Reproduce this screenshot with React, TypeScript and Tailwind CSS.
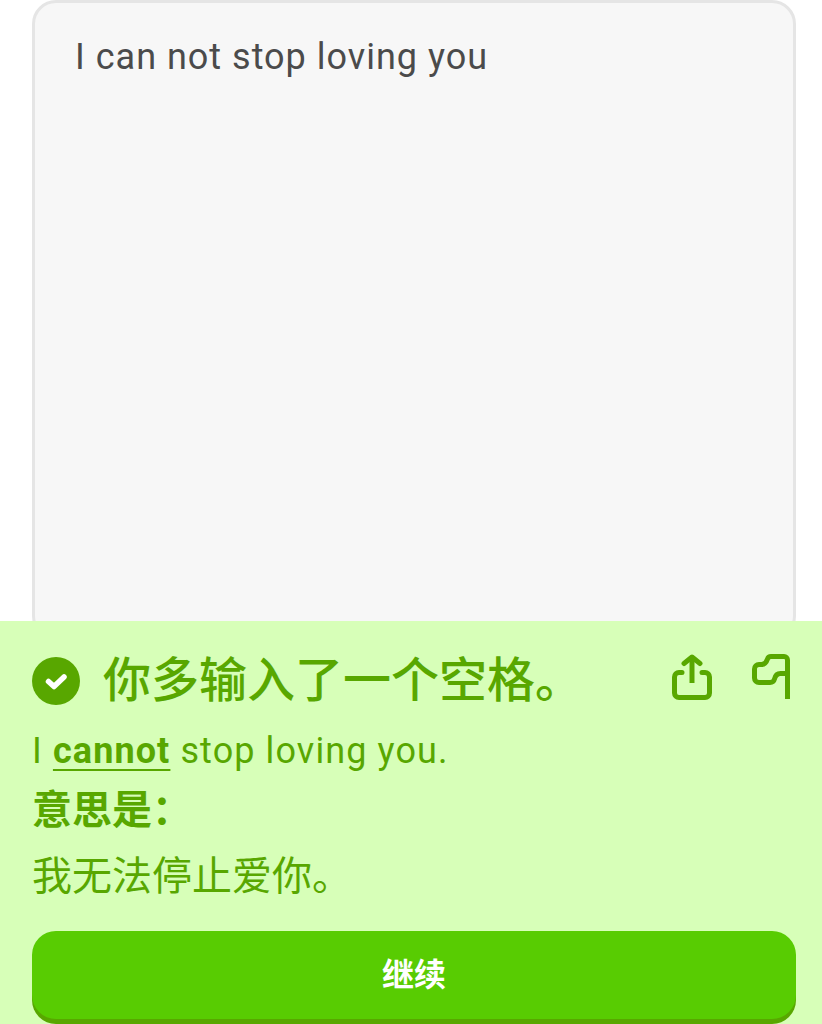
const font = '[font-family:Roboto,"Noto_Sans_CJK_SC",sans-serif]'

function CheckBadge() {
  return (
    <svg width="48" height="48" viewBox="0 0 48 48" className="shrink-0" aria-hidden>
      <circle cx="24" cy="24" r="24" fill="#58a700" />
      <path d="M16.5 24.5l5.5 5 10-9.5" fill="none" stroke="#fff" strokeWidth="5.5" strokeLinecap="round" strokeLinejoin="round" />
    </svg>
  )
}

function ShareIcon() {
  return (
    <svg width="40" height="46" viewBox="0 0 40 46" fill="none" stroke="#58a700" strokeWidth="5" strokeLinejoin="round" aria-hidden>
      <path strokeLinecap="round" d="M10 18.500H7a4.500 4.500 0 0 0-4.500 4.500v16A4.500 4.500 0 0 0 7 43.500h26a4.500 4.500 0 0 0 4.500-4.500V23a4.500 4.500 0 0 0-4.500-4.500h-3" />
      <path d="M20 29V3" />
      <path strokeLinecap="round" d="M12 9.500L20 3l8 6.500" />
    </svg>
  )
}

function FlagIcon() {
  return (
    <svg width="40" height="46" viewBox="0 0 40 46" fill="none" stroke="#58a700" strokeWidth="5" strokeLinejoin="round" aria-hidden>
      <path d="M35.500 45V6A3.500 3.500 0 0 0 32 2.500H19c-2 0-3 1-3.500 2.500-1 3-3 5.500-6 5.500H7A4.500 4.500 0 0 0 2.500 15v9A4.500 4.500 0 0 0 7 28.500h11c2.500 0 4-1.500 4.500-3.500.7-3 2.500-5.500 6-5.500h7" />
    </svg>
  )
}

export default function App() {
  return (
    <div className={`flex h-[1024px] w-[822px] flex-col overflow-hidden bg-white ${font}`}>
      <div className="h-[621px] shrink-0 pr-[26px] pl-8">
        <div className="h-[640px] rounded-[24px] border-[3px] border-[#e5e5e5] bg-[#f7f7f7] px-10 pt-[32px]">
          <p className="text-[36px] leading-[44px] tracking-[1px] text-[#4b4b4b]">I can not stop loving you</p>
        </div>
      </div>

      <div className="relative flex flex-1 flex-col bg-[#d7ffb8] pt-[30px] pr-[26px] pl-8 text-[#58a700]">
        <div className="flex h-[60px] items-center justify-between">
          <div className="flex items-center gap-[23px]">
            <CheckBadge />
            <h2 className="text-[48px] leading-[60px] font-medium">你多输入了一个空格。</h2>
          </div>
          <div className="-mt-[8px] flex items-start gap-[40px] pr-[4px]">
            <ShareIcon />
            <FlagIcon />
          </div>
        </div>

        <p className="mt-[18px] text-[36px] leading-[44px] tracking-[1.1px]">
          I <span className="font-bold underline decoration-[#58a700] decoration-2 underline-offset-[6px]">cannot</span> stop loving you.
        </p>
        <p className="mt-[15px] text-[40px] leading-[46px] font-bold">意思是：</p>
        <p className="mt-[20px] text-[40px] leading-[46px]">我无法停止爱你。</p>

        <button
          type="button"
          className="mt-[31px] h-[88px] w-full shrink-0 rounded-[24px] bg-[#58cc02] text-[32px] font-bold text-white shadow-[0_5px_0_#58a700]"
        >
          继续
        </button>
      </div>
    </div>
  )
}
